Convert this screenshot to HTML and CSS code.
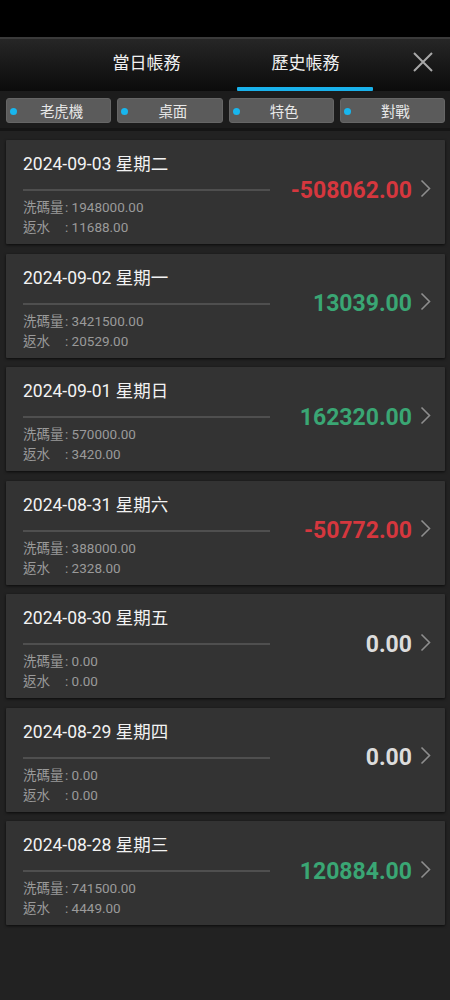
FILE: index.html
```html
<!DOCTYPE html>
<html lang="zh-Hant">
<head>
<meta charset="utf-8">
<link rel="stylesheet" href="styles.css">
</head>
<body>
<div class="statusbar"></div>
<header class="header">
  <nav class="tabs">
    <div class="tab">當日帳務</div>
    <div class="tab active">歷史帳務</div>
  </nav>
  <svg class="close" width="22" height="22" viewBox="0 0 22 22"><path d="M2 2 L20 20 M20 2 L2 20" stroke="#a8a8a8" stroke-width="2" fill="none"/></svg>
</header>
<div class="filters">
  <div class="fbtn"><span class="dot"></span>老虎機</div>
  <div class="fbtn"><span class="dot"></span>桌面</div>
  <div class="fbtn"><span class="dot"></span>特色</div>
  <div class="fbtn"><span class="dot"></span>對戰</div>
</div>
<main class="list">
  <div class="card">
    <div class="info">
      <div class="date">2024-09-03 星期二</div>
      <div class="sep"></div>
      <div class="sub"><span class="lbl">洗碼量</span>: 1948000.00</div>
      <div class="sub"><span class="lbl">返水</span>: 11688.00</div>
    </div>
    <div class="amount neg">-508062.00</div>
    <svg class="chev" width="11" height="19" viewBox="0 0 11 19"><polyline points="1.5,1.5 9.5,9.5 1.5,17.5" stroke="#8e8e8e" stroke-width="1.6" fill="none"/></svg>
  </div>
  <div class="card">
    <div class="info">
      <div class="date">2024-09-02 星期一</div>
      <div class="sep"></div>
      <div class="sub"><span class="lbl">洗碼量</span>: 3421500.00</div>
      <div class="sub"><span class="lbl">返水</span>: 20529.00</div>
    </div>
    <div class="amount pos">13039.00</div>
    <svg class="chev" width="11" height="19" viewBox="0 0 11 19"><polyline points="1.5,1.5 9.5,9.5 1.5,17.5" stroke="#8e8e8e" stroke-width="1.6" fill="none"/></svg>
  </div>
  <div class="card">
    <div class="info">
      <div class="date">2024-09-01 星期日</div>
      <div class="sep"></div>
      <div class="sub"><span class="lbl">洗碼量</span>: 570000.00</div>
      <div class="sub"><span class="lbl">返水</span>: 3420.00</div>
    </div>
    <div class="amount pos">162320.00</div>
    <svg class="chev" width="11" height="19" viewBox="0 0 11 19"><polyline points="1.5,1.5 9.5,9.5 1.5,17.5" stroke="#8e8e8e" stroke-width="1.6" fill="none"/></svg>
  </div>
  <div class="card">
    <div class="info">
      <div class="date">2024-08-31 星期六</div>
      <div class="sep"></div>
      <div class="sub"><span class="lbl">洗碼量</span>: 388000.00</div>
      <div class="sub"><span class="lbl">返水</span>: 2328.00</div>
    </div>
    <div class="amount neg">-50772.00</div>
    <svg class="chev" width="11" height="19" viewBox="0 0 11 19"><polyline points="1.5,1.5 9.5,9.5 1.5,17.5" stroke="#8e8e8e" stroke-width="1.6" fill="none"/></svg>
  </div>
  <div class="card">
    <div class="info">
      <div class="date">2024-08-30 星期五</div>
      <div class="sep"></div>
      <div class="sub"><span class="lbl">洗碼量</span>: 0.00</div>
      <div class="sub"><span class="lbl">返水</span>: 0.00</div>
    </div>
    <div class="amount zero">0.00</div>
    <svg class="chev" width="11" height="19" viewBox="0 0 11 19"><polyline points="1.5,1.5 9.5,9.5 1.5,17.5" stroke="#8e8e8e" stroke-width="1.6" fill="none"/></svg>
  </div>
  <div class="card">
    <div class="info">
      <div class="date">2024-08-29 星期四</div>
      <div class="sep"></div>
      <div class="sub"><span class="lbl">洗碼量</span>: 0.00</div>
      <div class="sub"><span class="lbl">返水</span>: 0.00</div>
    </div>
    <div class="amount zero">0.00</div>
    <svg class="chev" width="11" height="19" viewBox="0 0 11 19"><polyline points="1.5,1.5 9.5,9.5 1.5,17.5" stroke="#8e8e8e" stroke-width="1.6" fill="none"/></svg>
  </div>
  <div class="card">
    <div class="info">
      <div class="date">2024-08-28 星期三</div>
      <div class="sep"></div>
      <div class="sub"><span class="lbl">洗碼量</span>: 741500.00</div>
      <div class="sub"><span class="lbl">返水</span>: 4449.00</div>
    </div>
    <div class="amount pos">120884.00</div>
    <svg class="chev" width="11" height="19" viewBox="0 0 11 19"><polyline points="1.5,1.5 9.5,9.5 1.5,17.5" stroke="#8e8e8e" stroke-width="1.6" fill="none"/></svg>
  </div>
</main>
</body>
</html>
```
FILE: styles.css
```css
* { box-sizing: border-box; }
html, body { margin: 0; padding: 0; }
body {
  width: 450px;
  height: 1000px;
  background: #222222;
  font-family: Roboto, "Noto Sans CJK TC", sans-serif;
  color: #eeeeee;
  overflow: hidden;
}
.statusbar {
  height: 37px;
  background: #000;
}
.header {
  position: relative;
  height: 54px;
  border-top: 2px solid #3a3a3a;
  background: linear-gradient(#262626, #0b0b0b);
}
.tabs {
  display: flex;
  padding-left: 67px;
  height: 100%;
}
.tab {
  width: 159px;
  display: flex;
  justify-content: center;
  padding-top: 13px;
  font-size: 17px;
  line-height: 22px;
  color: #f0f0f0;
  position: relative;
}
.tab.active::after {
  content: "";
  position: absolute;
  left: 11px;
  right: 12px;
  bottom: 0;
  height: 4px;
  background: #19b1ea;
  border-radius: 1px;
}
.close {
  position: absolute;
  right: 16px;
  top: 12px;
}
.filters {
  display: grid;
  grid-template-columns: repeat(4, 1fr);
  gap: 6px;
  height: 40px;
  padding: 7px 5px 0 6px;
  background: #1c1c1c;
  border-bottom: 3px solid #151515;
}
.fbtn {
  position: relative;
  height: 25px;
  background: #5b5b5b;
  border: 1px solid #666;
  border-radius: 3px;
  display: flex;
  align-items: center;
  justify-content: center;
  font-size: 14.5px;
  color: #e8e8e8;
  padding-left: 6px;
}
.dot {
  position: absolute;
  left: 3px;
  top: 8.5px;
  width: 7px;
  height: 7px;
  border-radius: 50%;
  background: #18b6ee;
}
.list {
  display: flex;
  flex-direction: column;
  gap: 9.5px;
  padding: 9px 5px 0 6px;
}
.card {
  height: 104px;
  background: #333333;
  border-radius: 1px;
  box-shadow: 0 1px 3px rgba(0,0,0,0.7);
  display: flex;
  align-items: center;
  padding: 0 14px 0 17px;
}
.info {
  width: 247px;
  align-self: flex-start;
  padding-top: 14px;
}
.date {
  font-size: 17.5px;
  line-height: 20px;
  color: #f2f2f2;
}
.sep {
  height: 2px;
  background: #4f4f4f;
  margin: 15px 0 6px;
}
.sub {
  font-size: 13.5px;
  line-height: 20px;
  color: #9a9a9a;
}
.lbl {
  display: inline-block;
  width: 42px;
}
.amount {
  flex: 1;
  text-align: right;
  font-size: 23px;
  font-weight: 700;
  margin-right: 8px;
  margin-top: -4px;
}
.neg { color: #d5373e; }
.pos { color: #3aa674; }
.zero { color: #dcdcdc; }
.chev {
  margin-top: -8px;
}
```
